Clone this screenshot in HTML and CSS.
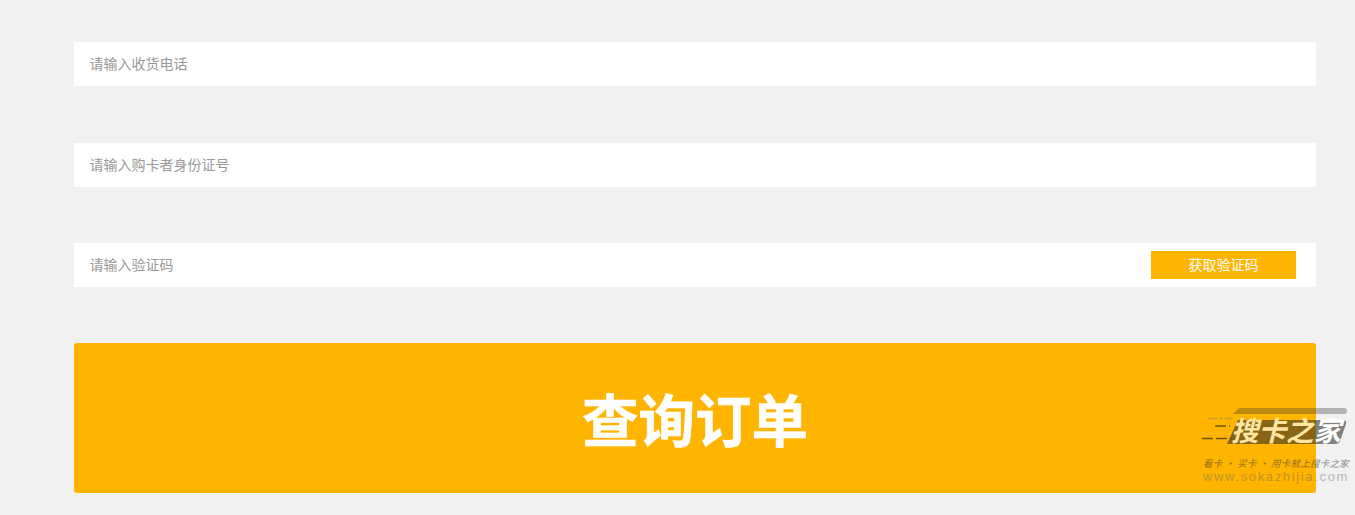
FILE: index.html
```html
<!DOCTYPE html>
<html lang="zh-CN">
<head>
    <meta charset="UTF-8">
    <meta name="viewport" content="width=device-width, initial-scale=1.0">
    <title>查询订单</title>
    <link rel="stylesheet" href="styles.css">
</head>
<body>
    <form class="query-form">
        <div class="field field-first">
            <input type="text" placeholder="请输入收货电话">
        </div>
        <div class="field">
            <input type="text" placeholder="请输入购卡者身份证号">
        </div>
        <div class="field">
            <input type="text" placeholder="请输入验证码">
            <button type="button" class="code-btn">获取验证码</button>
        </div>
        <button type="button" class="submit-btn">查询订单</button>
    </form>

    <!-- Watermark -->
    <svg class="watermark" width="155" height="80" viewBox="0 0 155 80">
        <defs>
            <linearGradient id="wmTitle" gradientUnits="userSpaceOnUse" x1="0" y1="0" x2="155" y2="0">
                <stop offset="0.748" stop-color="#ffe6a0"/>
                <stop offset="0.748" stop-color="#ffffff"/>
            </linearGradient>
        </defs>
        <path d="M33 9 L38 4 Q39 3 41 3 H144 Q147 3 147 6 Q147 9 144 9 Z" fill="#333" opacity="0.32"/>
        <path d="M38 15 H143 Q147 15 146 19 L140 36 Q139 39 135 39 H27 Z" fill="#242424" opacity="0.55"/>
        <path d="M8 13.5 H32" stroke="#c89a30" stroke-width="1.5" stroke-dasharray="9 2 4 2" fill="none"/>
        <path d="M15 21 H30 M2 33.5 H32" stroke="#6e5514" stroke-width="1.5" stroke-dasharray="11 3" fill="none"/>
        <text class="wm-title" x="31" y="36" fill="url(#wmTitle)">搜卡之家</text>
        <text class="wm-slogan" x="3" y="62">看卡 · 买卡 · 用卡就上搜卡之家</text>
        <text class="wm-url" x="3" y="76">www.sokazhijia.com</text>
    </svg>
</body>
</html>
```

FILE: styles.css
```css
body {
    margin: 0;
    height: 515px;
    overflow: hidden;
    background: #f1f1f1;
    font-family: "Noto Sans CJK SC", "Liberation Sans", sans-serif;
}
.query-form {
    display: flex;
    flex-direction: column;
    gap: 56px;
    margin: 0 39px 0 74px;
    padding-top: 42px;
}
.field {
    display: flex;
    align-items: center;
    height: 44px;
    padding: 0 20px 0 16px;
    background: white;
}
.field-first {
    margin-bottom: 1px;
}
input {
    flex: 1;
    border: none;
    outline: none;
    padding: 0 0 2px;
    margin-left: -0.5px;
    background: none;
    font-family: inherit;
    font-size: 14px;
    color: #333;
}
input::placeholder {
    color: #999;
}
.code-btn {
    width: 145px;
    height: 28px;
    padding: 0 0 2px;
    border: none;
    background: #ffb400;
    color: white;
    font-family: inherit;
    font-size: 14px;
}
.submit-btn {
    height: 150px;
    padding: 0 0 3px;
    border: none;
    border-radius: 3px;
    background: #ffb400;
    color: white;
    font-family: inherit;
    font-size: 56.5px;
    font-weight: bold;
    -webkit-text-stroke: 0.6px white;
}
.watermark {
    position: absolute;
    left: 1200px;
    top: 405px;
}
.wm-title {
    font-size: 27.5px;
    font-weight: bold;
    font-style: italic;
}
.wm-slogan {
    font-size: 9.5px;
    font-style: italic;
    letter-spacing: 0.25px;
    fill: #333;
    opacity: 0.55;
}
.wm-url {
    font-family: "Liberation Sans", sans-serif;
    font-size: 13px;
    letter-spacing: 1.65px;
    fill: #666;
    opacity: 0.42;
}
```
